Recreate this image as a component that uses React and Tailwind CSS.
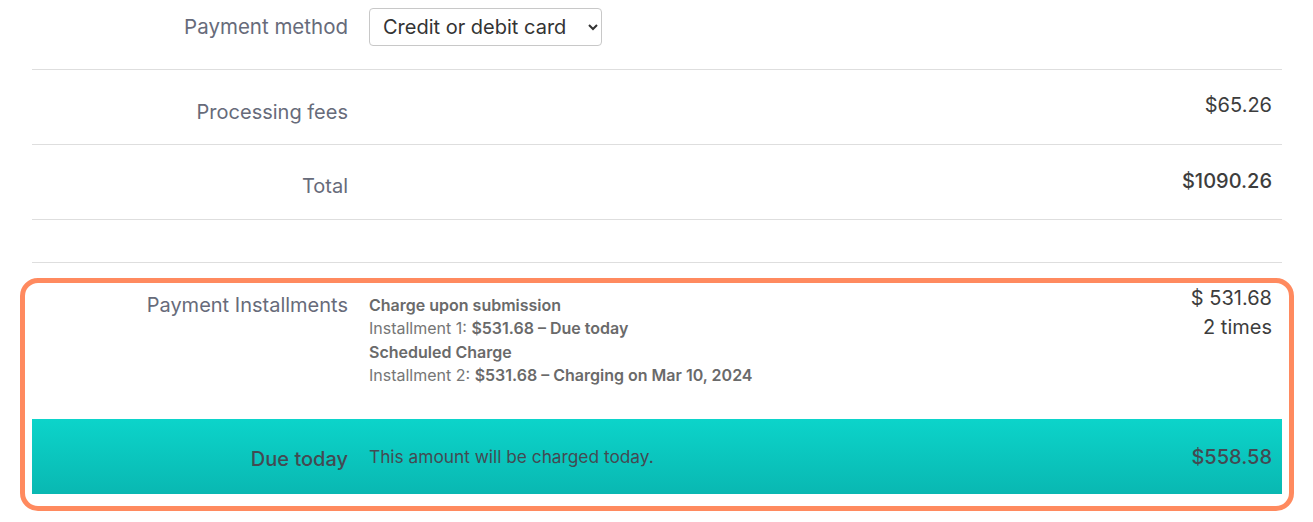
import React from 'react';

const font = { fontFamily: 'Inter, "Noto Sans", sans-serif' };

const Row = ({ label, children, value, className = '' }) => (
  <div className={`flex border-b border-[#dedede] ${className}`}>
    <div className="w-[316px] shrink-0 text-right text-[20px] text-[#676b7a]">{label}</div>
    <div className="flex-1 pl-[21px]">{children}</div>
    <div className="pr-[10px] text-right text-[20px] text-[#3d3d3d]">{value}</div>
  </div>
);

export default function App() {
  return (
    <div className="bg-white pl-8 pr-[31px] pb-[11px]" style={font}>
      {/* Payment method */}
      <div className="flex h-[70px] items-start border-b border-[#dedede] pt-2">
        <div className="flex h-[38px] w-[316px] shrink-0 items-center justify-end pt-[1px] text-[20.5px] text-[#676b7a]">
          Payment method
        </div>
        <div className="pl-[21px]">
          <select
            defaultValue="card"
            className="h-[38px] w-[233px] rounded border border-[#c8c8c8] bg-white pl-[9px] pr-2 text-[20px] text-[#333]"
            style={font}
          >
            <option value="card">Credit or debit card</option>
            <option value="bank">Bank account</option>
          </select>
        </div>
      </div>

      <Row label={<div className="pt-[27px]">Processing fees</div>} value={<div className="pt-[20px]">$65.26</div>} className="h-[75px]" />
      <Row label={<div className="pt-[26px]">Total</div>} value={<div className="pt-[21px] font-medium">$1090.26</div>} className="h-[75px]" />
      <div className="h-[43px] border-b border-[#dedede]" />

      {/* Installments */}
      <div className="-mx-3 mt-[15px] rounded-[18px] border-[5px] border-[#ff8a5f] px-[7px] pb-[12px]">
        <div className="flex h-[136px] pt-[7px]">
          <div className="w-[316px] shrink-0 text-right text-[20px] text-[#676b7a]">Payment Installments</div>
          <div className="flex-1 pl-[21px] pt-[4px] text-[16px] leading-[23.3px] text-[#767676]">
            <div className="font-semibold text-[#6a6a6a]">Charge upon submission</div>
            <div>
              Installment 1: <span className="font-semibold text-[#6a6a6a]">$531.68 – Due today</span>
            </div>
            <div className="font-semibold text-[#6a6a6a]">Scheduled Charge</div>
            <div>
              Installment 2: <span className="font-semibold text-[#6a6a6a]">$531.68 – Charging on Mar 10, 2024</span>
            </div>
          </div>
          <div className="-mt-[6px] pr-[10px] text-right text-[20px] leading-[29px] text-[#3d3d3d]">
            <div>$ 531.68</div>
            <div>2 times</div>
          </div>
        </div>

        <div className="flex h-[75px] items-center bg-gradient-to-b from-[#0cd4ca] to-[#09b8b2]">
          <div className="w-[316px] shrink-0 pt-[5px] text-right text-[20px] font-medium text-[#434a52]">Due today</div>
          <div className="flex-1 pl-[21px] text-[17.3px] text-[#434a52]">This amount will be charged today.</div>
          <div className="pr-[10px] text-right text-[20px] font-medium text-[#434a52]">$558.58</div>
        </div>
      </div>
    </div>
  );
}
